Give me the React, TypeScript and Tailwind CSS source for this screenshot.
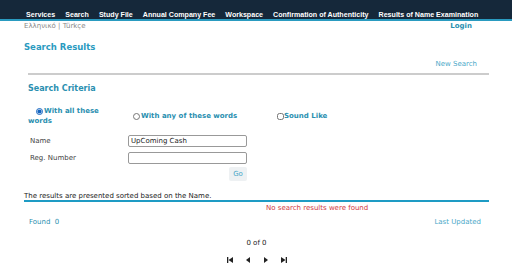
import { useState } from 'react';

const navItems = [
  'Services',
  'Search',
  'Study File',
  'Annual Company Fee',
  'Workspace',
  'Confirmation of Authenticity',
  'Results of Name Examination',
];

export default function App() {
  const [mode, setMode] = useState('all');
  const [name, setName] = useState('UpComing Cash');
  const [reg, setReg] = useState('');
  const [sound, setSound] = useState(false);

  return (
    <div className="w-[512px] h-[263px] overflow-hidden bg-white font-['DejaVu_Sans',sans-serif] text-[7px] text-[#333]">
      <div className="h-[21px] bg-[#15283a] border-b-2 border-[#2a9bc0] flex items-end pl-[26px] gap-[10px] text-white font-bold text-[7.1px] leading-[8px] font-['Liberation_Sans',sans-serif] whitespace-nowrap">
        {navItems.map((item) => (
          <span key={item}>{item}</span>
        ))}
      </div>

      <div className="flex justify-between pl-[24px] pr-[40px] leading-[10px]">
        <span className="text-[#888] text-[7px]">Ελληνικό | Türkçe</span>
        <span className="text-[#2a8fb0] font-bold text-[7px]">Login</span>
      </div>

      <div className="pl-[24px] pr-[23px]">
        <h2 className="mt-[10px] text-[#2a9ac0] font-bold text-[8.5px]">Search Results</h2>

        <div className="flex justify-end pr-[12px] mt-[5px]">
          <span className="text-[#4aa8c8] text-[7px]">New Search</span>
        </div>

        <div className="ml-[4px] mt-[4px] border-t-2 border-[#ccc]" />

        <div className="pl-[4px]">
          <h3 className="mt-[8px] text-[#2a8fb0] font-bold text-[8px]">Search Criteria</h3>

          <div className="mt-[12px] flex items-center text-[#2a8fb0] font-bold text-[7px]">
            <label className="w-[105px] leading-[8px]">
              <span className="ml-[8px] inline-flex items-center">
                <input
                  type="radio"
                  checked={mode === 'all'}
                  onChange={() => setMode('all')}
                  className="w-[7px] h-[7px] m-0 mr-[1px] accent-[#1565c0]"
                />
                With all these
              </span>
              <br />
              words
            </label>
            <label className="w-[144px] flex items-center">
              <input
                type="radio"
                checked={mode === 'any'}
                onChange={() => setMode('any')}
                className="w-[7px] h-[7px] m-0 mr-[1px]"
              />
              With any of these words
            </label>
            <label className="flex items-center">
              <input
                type="checkbox"
                checked={sound}
                onChange={(e) => setSound(e.target.checked)}
                className="w-[7px] h-[7px] m-0"
              />
              Sound Like
            </label>
          </div>

          <div className="mt-[10px] grid grid-cols-[98px_119px] gap-y-[5px] items-center pl-[2px] text-[#444] text-[7px]">
            <span>Name</span>
            <input
              value={name}
              onChange={(e) => setName(e.target.value)}
              className="h-[12px] border border-[#999] rounded-[2px] px-[2px] text-[7px] text-[#222] outline-none"
            />
            <span>Reg. Number</span>
            <input
              value={reg}
              onChange={(e) => setReg(e.target.value)}
              className="h-[12px] border border-[#999] rounded-[2px] px-[2px] text-[7px] outline-none"
            />
            <span />
            <div className="flex justify-end -mt-[2px]">
              <button className="bg-[#eef1f3] text-[#4aa8c8] text-[7px] w-[18px] h-[14px] rounded-[2px]">Go</button>
            </div>
          </div>
        </div>

        <p className="mt-[12px] text-[#222] text-[7px] leading-[7px]">The results are presented sorted based on the Name.</p>
        <div className="border-t-2 border-[#1e9bc4]" />

        <div className="pl-[242px] mt-[2px] text-[#d0393e] text-[7px] leading-[8px]">No search results were found</div>

        <div className="flex justify-between pl-[5px] pr-[8px] mt-[5px] text-[#2a8fb0] text-[7px]">
          <span>Found&nbsp; 0</span>
          <span className="text-[#4aa8c8]">Last Updated</span>
        </div>

        <div className="mt-[11px] text-center text-[#222] text-[7px]">0 of 0</div>
        <div className="mt-[8px] flex justify-center gap-[12px] text-[#222]">
          <svg width="6" height="6" viewBox="0 0 6 6"><rect x="0" y="0" width="1.3" height="6" fill="#222" /><polygon points="6,0 6,6 1.5,3" fill="#222" /></svg>
          <svg width="6" height="6" viewBox="0 0 6 6"><polygon points="5,0 5,6 1,3" fill="#222" /></svg>
          <svg width="6" height="6" viewBox="0 0 6 6"><polygon points="1,0 1,6 5,3" fill="#222" /></svg>
          <svg width="6" height="6" viewBox="0 0 6 6"><polygon points="0,0 0,6 4.5,3" fill="#222" /><rect x="4.7" y="0" width="1.3" height="6" fill="#222" /></svg>
        </div>
      </div>
    </div>
  );
}
